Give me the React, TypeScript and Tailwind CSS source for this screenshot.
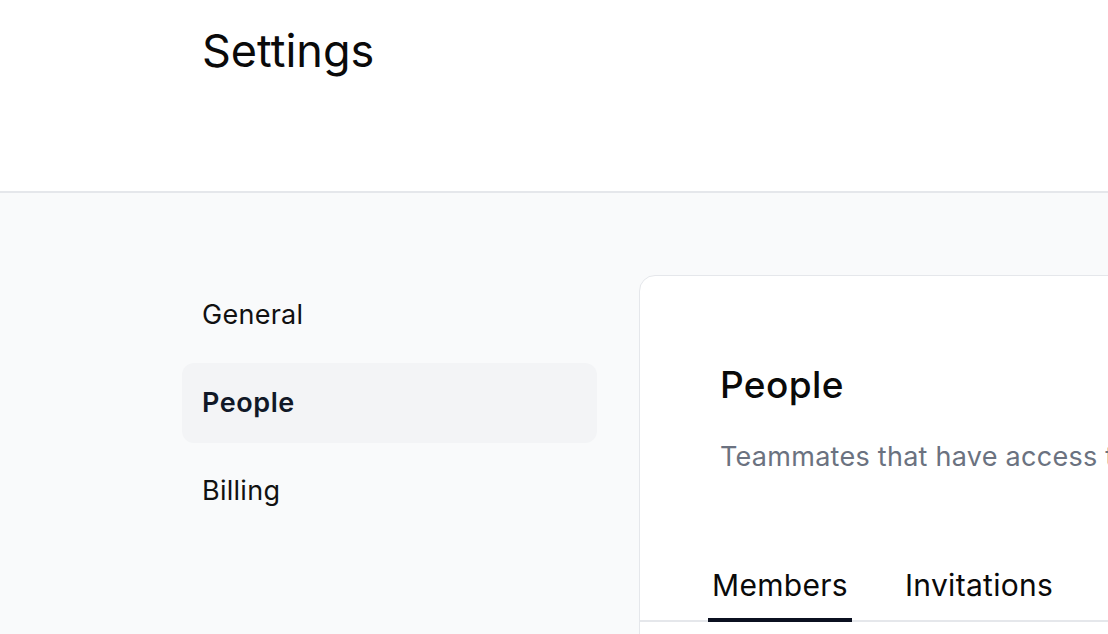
import React from "react";

export default function App() {
  return (
    <div
      className="h-[634px] w-[1108px] overflow-hidden bg-[#f9fafb]"
      style={{ fontFamily: "Inter, 'Noto Sans', sans-serif" }}
    >
      <header className="h-[193px] border-b-2 border-[#e5e7eb] bg-white pl-[202px] pt-[25px]">
        <h1 className="text-[45px] leading-[52px] font-normal text-[#0a0a0a]">Settings</h1>
      </header>
      <main className="flex gap-[42px] pl-[182px] pt-[82px]">
        <nav className="flex w-[415px] shrink-0 flex-col gap-2">
          <a className="flex h-20 items-center rounded-xl px-5 text-[27px] tracking-[0.01em] text-[#111111]">General</a>
          <a className="flex h-20 items-center rounded-xl bg-[#f3f4f6] px-5 text-[27px] tracking-[0.02em] font-semibold text-[#111827]">
            People
          </a>
          <a className="flex h-20 items-center rounded-xl px-5 text-[27px] tracking-[0.01em] text-[#111111]">Billing</a>
        </nav>
        <section className="w-[720px] shrink-0 rounded-tl-2xl border border-[#e5e7eb] bg-white">
          <div className="pl-[80px] pt-[89px]">
            <h2 className="text-[37px] leading-10 font-medium tracking-[0.01em] text-[#0a0a0a]">People</h2>
            <p className="mt-[34px] whitespace-nowrap text-[27px] leading-9 tracking-[0.01em] text-[#6b7280]">
              Teammates that have access to this workspace.
            </p>
          </div>
          <div className="mt-[92px] flex gap-[49px] border-b-2 border-[#e5e7eb] pl-[68px]">
            <button className="-mb-[2px] border-b-4 border-[#0b1020] px-1 pb-[15px] text-[30px] leading-9 tracking-[0.01em] text-[#0a0a0a]">
              Members
            </button>
            <button className="-mb-[2px] border-b-4 border-transparent px-1 pb-[15px] text-[30px] leading-9 tracking-[0.01em] text-[#0a0a0a]">
              Invitations
            </button>
          </div>
          <div className="h-40" />
        </section>
      </main>
    </div>
  );
}
